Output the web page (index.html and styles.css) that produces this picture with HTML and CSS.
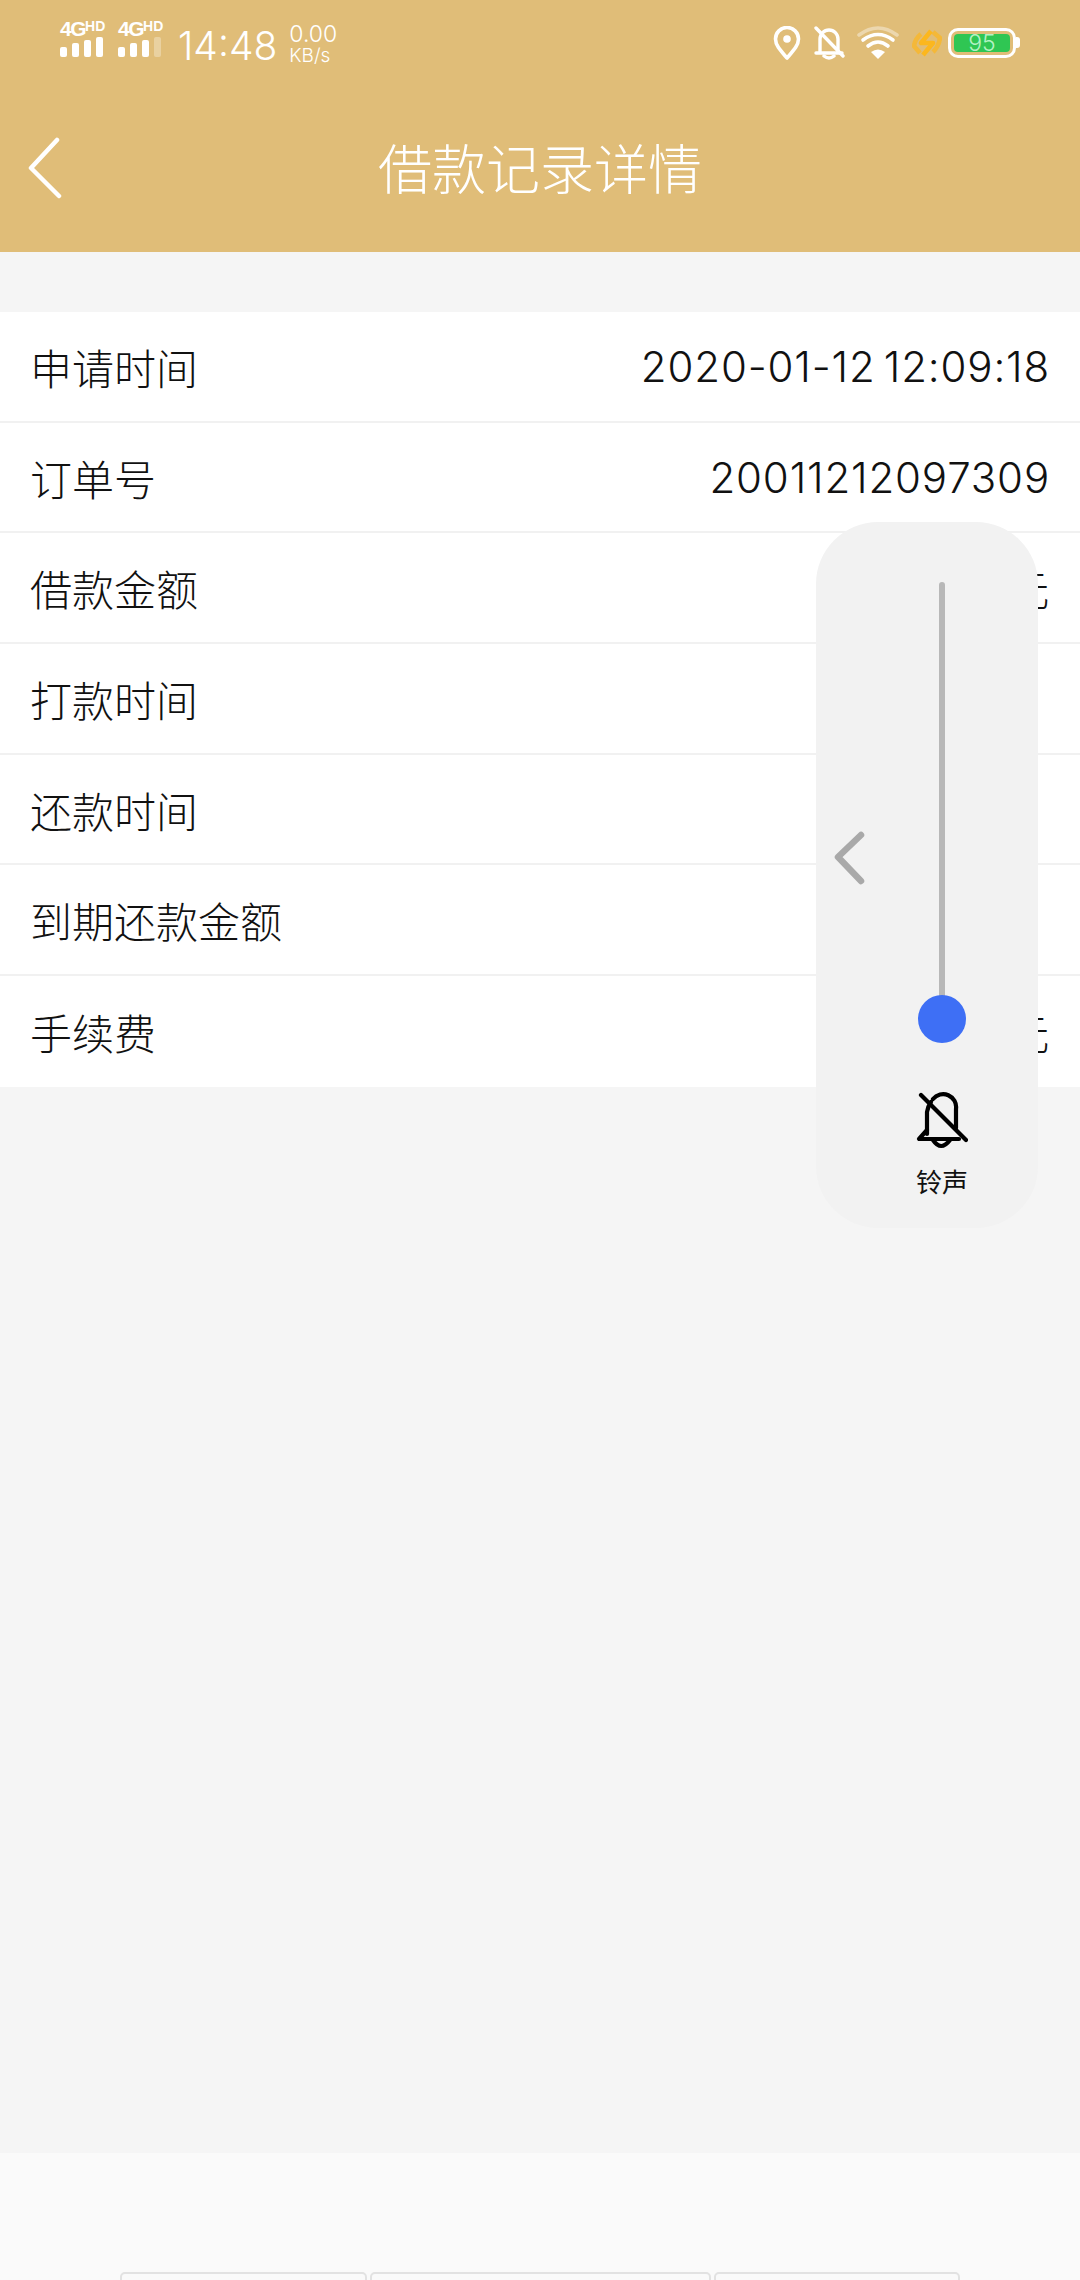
FILE: index.html
```html
<!DOCTYPE html>
<html lang="zh">
<head>
    <meta charset="utf-8">
    <title>借款记录详情</title>
    <link rel="stylesheet" href="styles.css">
</head>
<body>
    <div class="page">
        <header class="top">
            <div class="status">
                <div class="status-left">
                    <div class="sim">
                        <div class="sim-type">4G<span class="hd">HD</span></div>
                        <div class="bars">
                            <i class="bar b1"></i><i class="bar b2"></i><i class="bar b3"></i><i class="bar b4"></i>
                        </div>
                    </div>
                    <div class="sim">
                        <div class="sim-type">4G<span class="hd">HD</span></div>
                        <div class="bars">
                            <i class="bar b1"></i><i class="bar b2"></i><i class="bar b3"></i><i class="bar b4 off"></i>
                        </div>
                    </div>
                    <span class="clock">14:48</span>
                    <div class="speed"><span class="speed-num">0.00</span><span class="speed-unit">KB/s</span></div>
                </div>
                <div class="status-right">
                    <svg class="ic-pin" width="28" height="34" viewBox="0 0 28 34" fill="none" stroke="#fff" stroke-width="3.6">
                        <path d="M14 32 C8 25 2.5 19.5 2.5 13 A11.5 11.5 0 0 1 25.5 13 C25.5 19.5 20 25 14 32Z" stroke-linejoin="round"/>
                        <circle cx="14" cy="13" r="3.8" fill="#fff" stroke="none"/>
                    </svg>
                    <svg class="ic-mute" width="32" height="34" viewBox="0 0 32 34" fill="none" stroke="#fff" stroke-width="3.4" stroke-linecap="round">
                        <path d="M7 26 V13 A9 9 0 0 1 25 13 V26"/>
                        <path d="M3 27 H29"/>
                        <path d="M11 30 Q16 34 21 30"/>
                        <path d="M3 2 L30 30"/>
                    </svg>
                    <svg class="ic-wifi" width="42" height="34" viewBox="0 0 42 34" fill="none" stroke="#fff" stroke-width="3.6" stroke-linecap="round">
                        <path d="M2 9 Q21 -5 40 9" opacity="0.4"/>
                        <path d="M6 14 Q21 3 36 14"/>
                        <path d="M11 20 Q21 12 31 20"/>
                        <path d="M21 33 L14 26 Q21 21 28 26Z" fill="#fff" stroke="none"/>
                    </svg>
                    <svg class="ic-bolt" width="30" height="28" viewBox="0 0 30 28" fill="none" stroke="#fcb71e" stroke-width="4.6" stroke-linejoin="round">
                        <path d="M19 2 L9 14 H21 L11 26"/>
                        <path d="M9 5 Q3 10 2 17 L8 24" opacity="0.7"/>
                        <path d="M21 3 L28 9 Q27 17 21 23" opacity="0.7"/>
                    </svg>
                    <div class="battery">
                        <div class="battery-body"><span class="battery-fill">95</span></div>
                        <i class="battery-tip"></i>
                    </div>
                </div>
            </div>
            <div class="nav">
                <svg class="back" width="34" height="62" viewBox="0 0 34 62" fill="none" stroke="#fff" stroke-width="4.5" stroke-linecap="round" stroke-linejoin="round">
                    <path d="M29 3 L3 31 L31 59"/>
                </svg>
                <h1 class="title">借款记录详情</h1>
            </div>
        </header>

        <main class="content">
            <ul class="list">
                <li class="row"><span class="label">申请时间</span><span class="value">2020-01-12 12:09:18</span></li>
                <li class="row"><span class="label">订单号</span><span class="value">20011212097309</span></li>
                <li class="row"><span class="label">借款金额</span><span class="value">元</span></li>
                <li class="row"><span class="label">打款时间</span></li>
                <li class="row"><span class="label">还款时间</span></li>
                <li class="row"><span class="label">到期还款金额</span></li>
                <li class="row"><span class="label">手续费</span><span class="value">元</span></li>
            </ul>
        </main>

        <footer class="bottom">
            <div class="slot slot-a"></div>
            <div class="slot slot-b"></div>
            <div class="slot slot-c"></div>
        </footer>
    </div>

    <!-- volume popup floats over the list -->
    <aside class="volume">
        <svg class="volume-arrow" width="34" height="56" viewBox="0 0 34 56" fill="none" stroke="#a9a9a9" stroke-width="6.5" stroke-linecap="round" stroke-linejoin="round">
            <path d="M28 4 L5 26 L28 50"/>
        </svg>
        <div class="track"><div class="knob"></div></div>
        <svg class="volume-bell" width="52" height="58" viewBox="0 0 52 58" fill="none" stroke="#000" stroke-width="4.2" stroke-linecap="round" stroke-linejoin="round">
            <path d="M11 42 V20 Q12 14 15 10"/>
            <path d="M17 7 A13 13 0 0 1 40 17 V36"/>
            <path d="M11 38 L3 47 H43"/>
            <path d="M17 48 Q25 60 34 48"/>
            <path d="M5 3 L50 48"/>
        </svg>
        <span class="volume-label">铃声</span>
    </aside>
</body>
</html>
```

FILE: styles.css
```css
* {
    box-sizing: border-box;
}
html, body {
    margin: 0;
    padding: 0;
}
body {
    position: relative;
    width: 1080px;
    height: 2280px;
    overflow: hidden;
    background-color: #f5f5f5;
    font-family: "Noto Sans CJK SC", sans-serif;
}
.page {
    display: flex;
    flex-direction: column;
    height: 2280px;
}

/* header */
.top {
    height: 252px;
    background-color: #e0bd78;
    color: #fff;
}
.status {
    display: flex;
    justify-content: space-between;
    align-items: flex-start;
    height: 84px;
    padding: 19px 60px 0 60px;
}
.status-left {
    display: flex;
    align-items: flex-start;
}
.status-right {
    display: flex;
    align-items: center;
    height: 47px;
}
.sim {
    width: 58px;
}
.sim-type {
    display: flex;
    width: 48px;
    height: 18px;
    font-family: "Liberation Sans", sans-serif;
    font-size: 21px;
    font-weight: 700;
    line-height: 20px;
    letter-spacing: -1.5px;
}
.hd {
    font-size: 14px;
    line-height: 14px;
    letter-spacing: 0;
}
.bars {
    display: flex;
    align-items: flex-end;
    gap: 5.5px;
    height: 20px;
}
.bar {
    display: block;
    width: 6.5px;
    background-color: #fff;
    border-radius: 2px;
}
.b1 { height: 10px; }
.b2 { height: 14px; }
.b3 { height: 17px; }
.b4 { height: 20px; }
.off { opacity: 0.3; }
.clock {
    margin: 4px 0 0 2px;
    font-family: Inter, sans-serif;
    font-size: 39px;
    font-weight: 300;
    line-height: 46px;
}
.speed {
    display: flex;
    flex-direction: column;
    margin: 4px 0 0 12px;
    font-family: Inter, sans-serif;
    font-weight: 300;
}
.speed-num {
    font-size: 23px;
    line-height: 23px;
}
.speed-unit {
    font-size: 19px;
    line-height: 19px;
}
.ic-mute { margin-left: 12px; }
.ic-wifi { margin-left: 12px; }
.ic-bolt { margin-left: 13px; }
.battery {
    display: flex;
    align-items: center;
    margin-left: 6px;
}
.battery-body {
    width: 68px;
    height: 30px;
    padding: 3px;
    border: 3px solid #fff;
    border-radius: 10px;
}
.battery-fill {
    display: block;
    height: 18px;
    background-color: #2fc653;
    border-radius: 4px;
    color: #b4f2c4;
    font-family: Inter, sans-serif;
    font-size: 23px;
    font-weight: 300;
    line-height: 18px;
    text-align: center;
}
.battery-tip {
    display: block;
    width: 4px;
    height: 11px;
    background-color: #fff;
    border-radius: 0 3px 3px 0;
}
.nav {
    display: flex;
    align-items: center;
    justify-content: center;
    position: relative;
    height: 168px;
}
.back {
    position: absolute;
    left: 28px;
    top: 53px;
}
.title {
    margin: 0 0 3px 0;
    font-size: 54px;
    font-weight: 300;
    line-height: 64px;
}

/* list */
.content {
    flex: 1;
    padding-top: 60px;
}
.list {
    margin: 0;
    padding: 0;
    list-style: none;
    background-color: #fff;
}
.row {
    display: flex;
    justify-content: space-between;
    align-items: center;
    height: 110.7px;
    padding: 0 30px;
    border-bottom: 2px solid #f1f1f1;
    color: #111;
}
.row:last-child {
    border-bottom: none;
}
.label {
    font-size: 42px;
    font-weight: 300;
}
.value {
    font-family: Inter, "Noto Sans CJK SC", sans-serif;
    font-size: 42px;
    font-weight: 300;
    letter-spacing: 0.85px;
    word-spacing: -4.5px;
}

/* footer strip */
.bottom {
    display: flex;
    gap: 3px;
    height: 127px;
    padding: 119px 120px 0 120px;
    overflow: hidden;
    background-color: #fafafa;
}
.slot {
    height: 30px;
    border: 2px solid #e2e2e2;
    border-radius: 5px;
}
.slot-a { width: 247px; }
.slot-b { width: 342px; }
.slot-c { width: 246px; }

/* volume popup */
.volume {
    position: absolute;
    left: 816px;
    top: 522px;
    display: flex;
    flex-direction: column;
    align-items: center;
    width: 222px;
    height: 706px;
    padding: 60px 0 0 30px;
    background-color: #f2f2f2;
    border-radius: 62px;
}
.volume-arrow {
    position: absolute;
    left: 17px;
    top: 309px;
}
.track {
    position: relative;
    flex: none;
    width: 6px;
    height: 437px;
    background-color: #b8b8b8;
    border-radius: 3px;
}
.knob {
    position: absolute;
    left: -21px;
    bottom: -24px;
    width: 48px;
    height: 48px;
    background-color: #3e6ff5;
    border-radius: 50%;
}
.volume-bell {
    margin-top: 73px;
}
.volume-label {
    margin-top: 13px;
    color: #111;
    font-size: 26px;
    line-height: 36px;
}
```
